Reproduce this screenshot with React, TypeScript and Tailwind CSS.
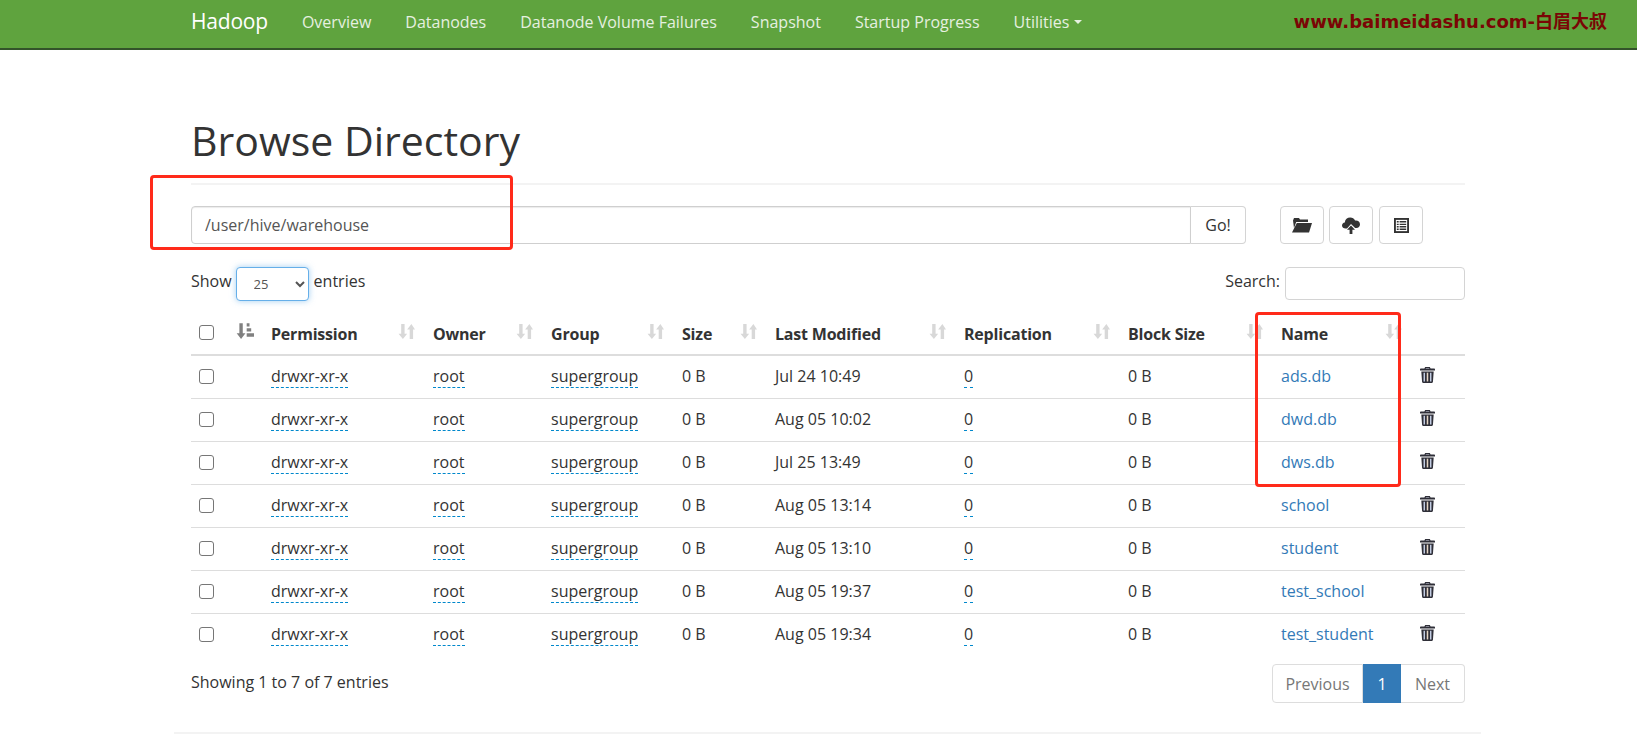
const rows = [
  { modified: 'Jul 24 10:49', name: 'ads.db' },
  { modified: 'Aug 05 10:02', name: 'dwd.db' },
  { modified: 'Jul 25 13:49', name: 'dws.db' },
  { modified: 'Aug 05 13:14', name: 'school' },
  { modified: 'Aug 05 13:10', name: 'student' },
  { modified: 'Aug 05 19:37', name: 'test_school' },
  { modified: 'Aug 05 19:34', name: 'test_student' },
];

const navItems = ['Overview', 'Datanodes', 'Datanode Volume Failures', 'Snapshot', 'Startup Progress'];

function SortBoth() {
  return (
    <svg viewBox="0 0 16 16" className="w-[17px] h-[17px] mb-[4px] text-[#d8d8d8]" fill="currentColor">
      <path d="M3 1h3.2v9h2.4L4.6 15 .5 10H3z" />
      <path d="M11 15h3.2V6h1.8L12.6 1 8.6 6H11z" />
    </svg>
  );
}

function SortAttr() {
  return (
    <svg viewBox="0 0 16 16" className="w-[18px] h-[18px] mb-[4px] text-[#808080]" fill="currentColor">
      <path d="M3 1h3v9h2.4L4.5 15 .6 10H3z" />
      <path d="M9.5 1H12v3H9.5zM9.5 5.5h4v3h-4zM9.5 10h6.5v3H9.5z" />
    </svg>
  );
}

function FolderOpen() {
  return (
    <svg viewBox="0 0 20 16" className="w-[20px] h-[16px] text-[#333]" fill="currentColor">
      <path d="M1 3.5 2 1h5l1 1.5h8V5H4.2L2 11z" />
      <path d="M4.8 6H20l-3 9.5H0z" />
    </svg>
  );
}

function CloudUpload() {
  return (
    <svg viewBox="0 0 18 17" className="w-[18px] h-[17px] text-[#333]" fill="currentColor">
      <path d="M5 11.5H3.6C1.6 11.5 0 10.2 0 8.4 0 6.8 1.2 5.6 2.8 5.4 3.1 2.6 5.3.6 8.2.6c2.2 0 4 1.2 4.9 3 .3-.1.6-.1.9-.1 2.2 0 4 1.6 4 3.9 0 1.8-1.5 3.6-3.6 3.6h-1.3L9 7z" />
      <path d="M9 8.4 13 12.8h-2.6V17H7.6v-4.2H5z" />
    </svg>
  );
}

function ListAlt() {
  return (
    <svg viewBox="0 0 16 16" className="w-[15px] h-[15px] text-[#333]">
      <path fill="currentColor" d="M0 0h16v16H0z" />
      <path fill="#fff" d="M2 2h12v12H2z" />
      <path fill="currentColor" d="M3 3.2h2v1.5H3zM6 3.2h7v1.5H6zM3 6h2v1.5H3zM6 6h7v1.5H6zM3 8.6h2v1.5H3zM6 8.6h7v1.5H6zM3 11.2h2v1.5H3zM6 11.2h7v1.5H6z" />
    </svg>
  );
}

function Trash() {
  return (
    <svg viewBox="0 0 16 17" className="w-[15px] h-[16px]">
      <path fill="#2f2f38" d="M5.5 0h5l.8 1.6H15c.5 0 1 .4 1 1v1.2H0V2.6c0-.6.5-1 1-1h3.7zM1.4 4.8h13.2l-.8 11c0 .7-.5 1.2-1.2 1.2H3.4c-.7 0-1.2-.5-1.2-1.2z" />
      <path fill="#d9dcec" d="M6.3 1h3.4l.3.6H6z" />
      <path fill="#c9d3ea" d="M3.8 6h1.5v9.4H3.8z" />
      <path fill="#e6d6c4" d="M7.2 6h1.6v9.4H7.2z" />
      <path fill="#c9d3ea" d="M10.7 6h1.5v9.4h-1.5z" />
    </svg>
  );
}

function Dashed({ children }: { children: string }) {
  return <span className="border-b border-dashed border-[#0088cc]">{children}</span>;
}

export default function App() {
  return (
    <div className="relative h-[750px] w-[1637px] overflow-hidden bg-white text-[16px] text-[#333] font-['Open_Sans','Noto_Sans_CJK_SC',sans-serif]">
      <nav className="flex items-center h-[50px] pl-[191px] pb-[5px] bg-[#5fa33e] border-b-2 border-[#33532a] text-[#e6f0e0]">
        <span className="text-[21px] text-white mr-[34px] tracking-[-0.2px]">Hadoop</span>
        <div className="flex gap-[34px]">
          {navItems.map((n) => (
            <span key={n}>{n}</span>
          ))}
          <span className="flex items-center gap-[5px]">
            Utilities
            <span className="w-0 h-0 border-x-[4px] border-x-transparent border-t-[4px] border-t-[#e6f0e0]" />
          </span>
        </div>
        <span className="ml-auto mr-[30px] text-[18px] font-bold text-[#7a0505] font-['DejaVu_Sans','Noto_Sans_CJK_SC',sans-serif]">
          www.baimeidashu.com-白眉大叔
        </span>
      </nav>

      <div className="ml-[174px] w-[1307px]">
        <div className="pl-[17px] pr-[16px]">
          <h1 className="pt-[60px] pb-[13px] text-[41px] leading-[60px] border-b-2 border-[#f3f3f3] h-[135px]">
            Browse Directory
          </h1>

          <div className="flex mt-[21px] h-[38px]">
            <div className="flex w-[1055px] h-[38px]">
              <input
                readOnly
                value="/user/hive/warehouse"
                className="flex-1 min-w-0 px-[13px] border border-[#cfcfcf] rounded-l-[4px] shadow-[inset_0_1px_1px_rgba(0,0,0,0.08)] text-[#555] outline-none"
              />
              <button className="w-[55px] border border-l-0 border-[#d4d4d4] rounded-r-[4px]">Go!</button>
            </div>
            <div className="flex gap-[5px] ml-[34px]">
              <button className="flex items-center justify-center w-[44px] border border-[#d4d4d4] rounded-[4px]"><FolderOpen /></button>
              <button className="flex items-center justify-center w-[44px] border border-[#d4d4d4] rounded-[4px]"><CloudUpload /></button>
              <button className="flex items-center justify-center w-[44px] ml-px border border-[#d4d4d4] rounded-[4px]"><ListAlt /></button>
            </div>
          </div>

          <div className="flex justify-between items-start mt-[23px] h-[33px]">
            <div className="flex items-center gap-[5px] h-[28px]">
              <span className="mr-[-1px]">Show</span>
              <select className="w-[73px] h-[34px] mt-[5px] pl-[13px] text-[13px] text-[#555] bg-white border border-[#66afe9] rounded-[4px] shadow-[0_0_6px_rgba(102,175,233,0.6)] outline-none">
                <option>25</option>
              </select>
              <span>entries</span>
            </div>
            <div className="flex items-center gap-[5px] h-[28px]">
              <span>Search:</span>
              <input readOnly className="w-[180px] h-[33px] mt-[5px] border border-[#d4d4d4] rounded-[4px] outline-none" />
            </div>
          </div>

          <table className="mt-[11px] w-[1274px] table-fixed border-collapse">
            <colgroup>
              <col className="w-[37px]" />
              <col className="w-[34px]" />
              <col className="w-[162px]" />
              <col className="w-[118px]" />
              <col className="w-[131px]" />
              <col className="w-[93px]" />
              <col className="w-[189px]" />
              <col className="w-[164px]" />
              <col className="w-[153px]" />
              <col className="w-[139px]" />
              <col className="w-[54px]" />
            </colgroup>
            <thead>
              <tr className="h-[44px] border-b-2 border-[#dddddd] text-left">
                <th className="pl-[8px] font-normal"><input type="checkbox" className="block w-[15px] h-[15px] appearance-none border border-[#767676] rounded-[3px]" /></th>
                <th className="pl-[8px]"><SortAttr /></th>
                {['Permission', 'Owner', 'Group', 'Size', 'Last Modified', 'Replication', 'Block Size', 'Name'].map((h) => (
                  <th key={h} className="px-[9px] pt-[2px] font-bold tracking-[-0.2px]">
                    <div className="flex items-center justify-between">
                      <span>{h}</span>
                      <SortBoth />
                    </div>
                  </th>
                ))}
                <th />
              </tr>
            </thead>
            <tbody>
              {rows.map((r, i) => (
                <tr key={r.name} className={i < rows.length - 1 ? 'h-[43px] border-b border-[#dddddd]' : 'h-[43px]'}>
                  <td className="pl-[8px]"><input type="checkbox" className="block w-[15px] h-[15px] appearance-none border border-[#767676] rounded-[3px]" /></td>
                  <td />
                  <td className="px-[9px] pb-[2px]"><Dashed>drwxr-xr-x</Dashed></td>
                  <td className="px-[9px] pb-[2px]"><Dashed>root</Dashed></td>
                  <td className="px-[9px] pb-[2px]"><Dashed>supergroup</Dashed></td>
                  <td className="px-[9px] pb-[2px]">0 B</td>
                  <td className="px-[9px] pb-[2px]">{r.modified}</td>
                  <td className="px-[9px] pb-[2px]"><Dashed>0</Dashed></td>
                  <td className="px-[9px] pb-[2px]">0 B</td>
                  <td className="px-[9px] pb-[2px] text-[#337ab7]">{r.name}</td>
                  <td className="pl-[9px] pb-[3px]"><Trash /></td>
                </tr>
              ))}
            </tbody>
          </table>

          <div className="flex justify-between items-start mt-[8px]">
            <span className="mt-[6px]">Showing 1 to 7 of 7 entries</span>
            <div className="flex h-[39px] text-[#777]">
              <span className="flex items-center justify-center w-[91px] border border-[#dddddd] rounded-l-[4px]">Previous</span>
              <span className="flex items-center justify-center w-[38px] bg-[#337ab7] text-white">1</span>
              <span className="flex items-center justify-center w-[64px] border border-l-0 border-[#dddddd] rounded-r-[4px]">Next</span>
            </div>
          </div>
        </div>
        <div className="mt-[29px] border-t-2 border-[#f3f3f3]" />
      </div>

      <div className="absolute left-[150px] top-[175px] w-[363px] h-[75px] border-[3px] border-[#ff2a1a] rounded-[4px]" />
      <div className="absolute left-[1255px] top-[312px] w-[146px] h-[175px] border-[3px] border-[#ff2a1a] rounded-[4px]" />
    </div>
  );
}
